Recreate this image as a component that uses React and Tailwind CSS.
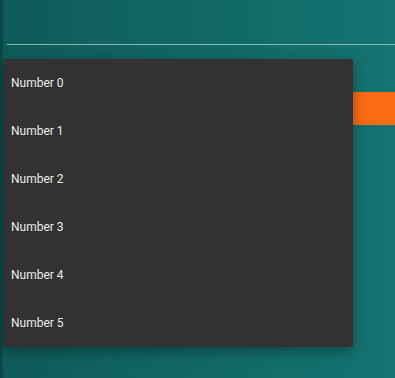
import React from 'react';

const items = [0, 1, 2, 3, 4, 5];

export default function App() {
  return (
    <div className="relative flex h-[378px] w-[395px] overflow-hidden bg-gradient-to-r from-[#0f5b59] to-[#147472] font-['Roboto',sans-serif]">
      <div className="w-[3px] shrink-0 bg-[#0a4948]" />
      <div className="flex flex-1 flex-col">
        <div className="ml-[4px] mt-[44px] h-px bg-[#8ab9b5]" />
        <div className="mt-[47px] h-[33px] bg-[#fb6b12]" />
      </div>

      {/* dropdown menu */}
      <div className="absolute left-[3px] top-[59px] w-[350px] rounded-[2px] bg-[#323232] shadow-[0_4px_14px_rgba(0,0,0,0.35)]">
        {items.map((n) => (
          <div key={n} className="flex h-[48px] items-center px-[8px] text-[12px] text-[#ececec]">
            Number {n}
          </div>
        ))}
      </div>
    </div>
  );
}
